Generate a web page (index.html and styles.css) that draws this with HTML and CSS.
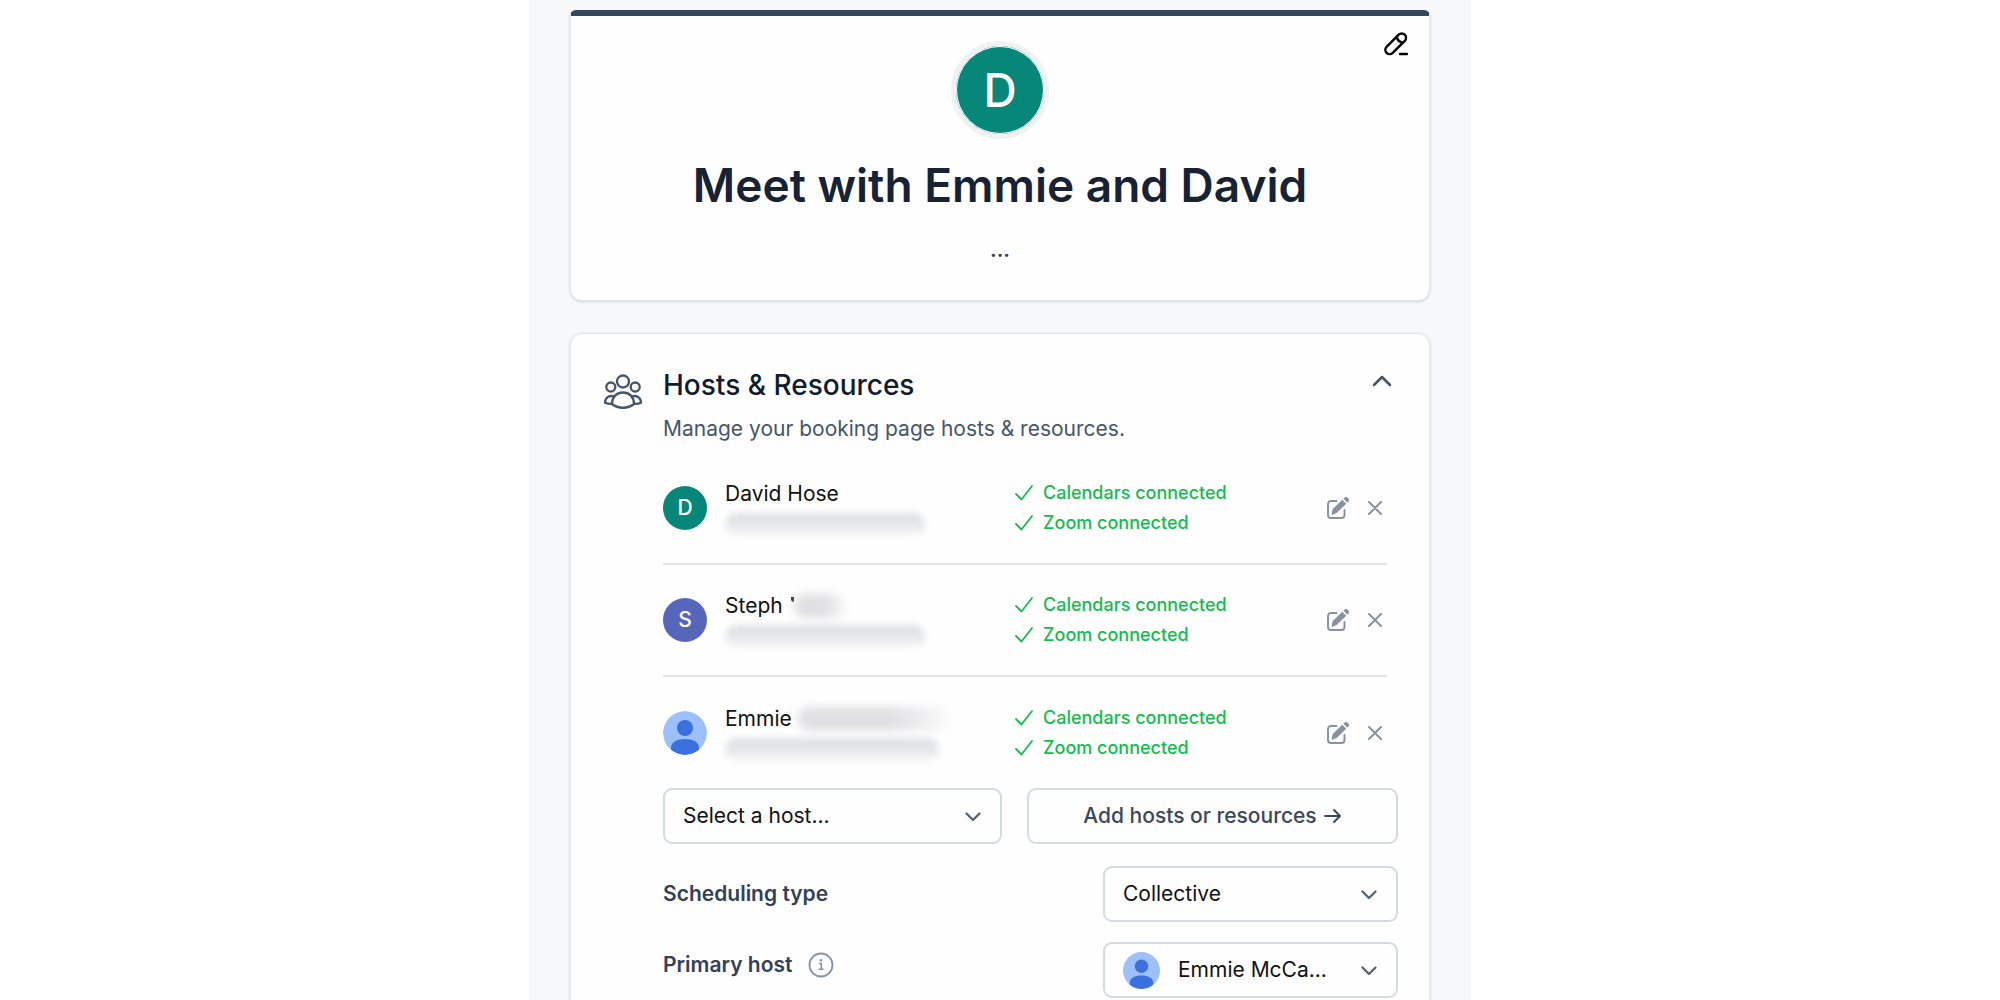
FILE: index.html
```
<!DOCTYPE html>
<html lang="en">

<head>
    <meta charset="utf-8">
    <meta name="viewport" content="width=device-width, initial-scale=1">
    <title>Meet with Emmie and David</title>
    <link rel="stylesheet" href="styles.css">
</head>

<body>
    <!-- shared icons -->
    <svg class="sprite" aria-hidden="true">
        <symbol id="check" viewBox="0 0 18 16">
            <path d="M1 9l5.5 5.5L17 1" fill="none" stroke="currentColor" stroke-width="1.8" stroke-linecap="round" stroke-linejoin="round"/>
        </symbol>
        <symbol id="chevron" viewBox="0 0 16 10">
            <path d="M1.5 1.5L8 8l6.5-6.5" fill="none" stroke="currentColor" stroke-width="2.3" stroke-linecap="round" stroke-linejoin="round"/>
        </symbol>
        <symbol id="edit" viewBox="0 0 22 22">
            <path d="M9.5 4H4a3 3 0 0 0-3 3v11a3 3 0 0 0 3 3h10.5a3 3 0 0 0 3-3v-5" fill="none" stroke="currentColor" stroke-width="1.9" stroke-linecap="round"/>
            <path d="M4.5 18l1.2-6L15.2 2.700l4 4L9.700 16z" fill="currentColor"/>
            <path d="M16.400 1.600l.6-.6a2.700 2.700 0 0 1 4 4l-.8.700z" fill="currentColor"/>
        </symbol>
        <symbol id="cross" viewBox="0 0 14 14">
            <path d="M1 1l12 12M13 1L1 13" fill="none" stroke="currentColor" stroke-width="2" stroke-linecap="round"/>
        </symbol>
        <symbol id="person" viewBox="0 0 44 44">
            <clipPath id="round"><circle cx="22" cy="22" r="22"/></clipPath>
            <g clip-path="url(#round)">
                <rect width="44" height="44" fill="#9dc0fb"/>
                <circle cx="22" cy="17" r="8" fill="#3b71df"/>
                <path d="M8 37c0-6 6-9 14-9s14 3 14 9v7H8z" fill="#3b71df"/>
            </g>
        </symbol>
    </svg>

    <main class="panel">
        <section class="card intro">
            <button class="icon-btn intro-edit" aria-label="Edit page">
                <svg width="24" height="24" viewBox="0 0 24 24" fill="none" stroke="currentColor" stroke-width="2.4" stroke-linecap="round" stroke-linejoin="round">
                    <path d="M2.600 14.800L14.700 2.700a4.300 4.300 0 0 1 6.100 6.100L8.700 20.900a4.300 4.300 0 0 1-6.100-6.100z"/>
                    <path d="M12.800 4.800c.5 3.200 2.600 5.300 5.900 5.900M16 22h7"/>
                </svg>
            </button>
            <div class="avatar avatar-big teal">D</div>
            <h1>Meet with Emmie and David</h1>
            <p class="dots">...</p>
        </section>

        <section class="card hosts">
            <svg class="group" width="38" height="36" viewBox="0 0 38 36" fill="none" stroke="currentColor" stroke-width="2.3" stroke-linejoin="round">
                <circle cx="19" cy="7.5" r="6"/>
                <circle cx="6.800" cy="13" r="4.500"/>
                <circle cx="31.200" cy="13" r="4.500"/>
                <path d="M8 30c0-7 4.500-11.500 11-11.500S30 23 30 30c-6 5-16 5-22 0z"/>
                <path d="M10.500 22.500c-5-1.500-9.500.5-9.500 6.200 2 1 4.500 1.300 7 1.200M27.500 22.500c5-1.500 9.500.5 9.500 6.200-2 1-4.500 1.300-7 1.200"/>
            </svg>
            <div class="content">
                <header class="head">
                    <div>
                        <h2>Hosts &amp; Resources</h2>
                        <p>Manage your booking page hosts &amp; resources.</p>
                    </div>
                    <button class="icon-btn collapse" aria-label="Collapse section">
                        <svg width="20" height="12" viewBox="0 0 20 12" fill="none" stroke="currentColor" stroke-width="2.5" stroke-linecap="round" stroke-linejoin="round">
                            <path d="M2 10l8-8 8 8"/>
                        </svg>
                    </button>
                </header>

                <ul class="host-list">
                    <li class="host">
                        <div class="avatar teal">D</div>
                        <div class="who">
                            <div class="name">David Hose</div>
                            <div class="email"></div>
                        </div>
                        <div class="status">
                            <div><svg width="18" height="16"><use href="#check"/></svg>Calendars connected</div>
                            <div><svg width="18" height="16"><use href="#check"/></svg>Zoom connected</div>
                        </div>
                        <div class="actions">
                            <button class="icon-btn" aria-label="Edit David"><svg width="22" height="22"><use href="#edit"/></svg></button>
                            <button class="icon-btn" aria-label="Remove David"><svg width="14" height="14"><use href="#cross"/></svg></button>
                        </div>
                    </li>
                    <li class="host">
                        <div class="avatar indigo">S</div>
                        <div class="who">
                            <div class="name">Steph <i class="stem"></i><span class="surname short"></span></div>
                            <div class="email"></div>
                        </div>
                        <div class="status">
                            <div><svg width="18" height="16"><use href="#check"/></svg>Calendars connected</div>
                            <div><svg width="18" height="16"><use href="#check"/></svg>Zoom connected</div>
                        </div>
                        <div class="actions">
                            <button class="icon-btn" aria-label="Edit Steph"><svg width="22" height="22"><use href="#edit"/></svg></button>
                            <button class="icon-btn" aria-label="Remove Steph"><svg width="14" height="14"><use href="#cross"/></svg></button>
                        </div>
                    </li>
                    <li class="host">
                        <svg class="avatar" viewBox="0 0 44 44"><use href="#person"/></svg>
                        <div class="who">
                            <div class="name">Emmie <span class="surname"></span></div>
                            <div class="email long"></div>
                        </div>
                        <div class="status">
                            <div><svg width="18" height="16"><use href="#check"/></svg>Calendars connected</div>
                            <div><svg width="18" height="16"><use href="#check"/></svg>Zoom connected</div>
                        </div>
                        <div class="actions">
                            <button class="icon-btn" aria-label="Edit Emmie"><svg width="22" height="22"><use href="#edit"/></svg></button>
                            <button class="icon-btn" aria-label="Remove Emmie"><svg width="14" height="14"><use href="#cross"/></svg></button>
                        </div>
                    </li>
                </ul>

                <div class="add-row">
                    <div class="select">
                        <select aria-label="Select a host">
                            <option>Select a host...</option>
                        </select>
                        <svg class="arrow" width="16" height="10"><use href="#chevron"/></svg>
                    </div>
                    <button class="add-btn">Add hosts or resources
                        <svg width="18" height="16" viewBox="0 0 18 16" fill="none" stroke="currentColor" stroke-width="2" stroke-linecap="round" stroke-linejoin="round">
                            <path d="M1 8h15M10 2l6 6-6 6"/>
                        </svg>
                    </button>
                </div>

                <div class="setting">
                    <label for="type">Scheduling type</label>
                    <div class="select">
                        <select id="type">
                            <option>Collective</option>
                        </select>
                        <svg class="arrow" width="16" height="10"><use href="#chevron"/></svg>
                    </div>
                </div>

                <div class="setting primary">
                    <div class="label-group">
                        <label for="primary">Primary host</label>
                        <svg class="info" width="26" height="26" viewBox="0 0 26 26" fill="none" stroke="currentColor">
                            <circle cx="13" cy="13" r="11.5" stroke-width="1.8"/>
                            <path d="M11 11.5h2.300V17M10.5 17.200h5" stroke-width="1.6"/>
                            <circle cx="13" cy="8.300" r="1.2" fill="currentColor" stroke="none"/>
                        </svg>
                    </div>
                    <div class="select with-avatar">
                        <svg class="mini-avatar" viewBox="0 0 44 44"><use href="#person"/></svg>
                        <select id="primary">
                            <option>Emmie McCa...</option>
                        </select>
                        <svg class="arrow" width="16" height="10"><use href="#chevron"/></svg>
                    </div>
                </div>
            </div>
        </section>
    </main>
</body>

</html>
```
FILE: styles.css
```
* {
    box-sizing: border-box;
}

html {
    scrollbar-width: none;
}

body {
    margin: 0;
    background: #fff;
    color: #111;
    font-family: Inter, sans-serif;
    font-size: 21px;
    line-height: 30px;
}

h1, h2, p, ul {
    margin: 0;
    padding: 0;
}

svg {
    display: block;
    flex-shrink: 0;
}

.sprite {
    position: absolute;
    width: 0;
    height: 0;
}

.panel {
    max-width: 942px;
    min-height: 100vh;
    margin: 0 auto;
    padding: 10px 41px 32px;
    background: #f7f8f9;
    display: flex;
    flex-direction: column;
    gap: 32px;
}

.card {
    background: #fefefe;
    border: 1px solid #dfe2e8;
    border-radius: 12px;
    box-shadow: 0 1px 3px rgba(30, 41, 59, 0.15);
}

.icon-btn {
    padding: 0;
    border: none;
    background: none;
    color: inherit;
    cursor: pointer;
}

/* Intro card */
.intro {
    position: relative;
    border-top: 6px solid #34475f;
    border-radius: 6px 6px 12px 12px;
    padding: 25px 32px 35px;
    display: flex;
    flex-direction: column;
    align-items: center;
    text-align: center;
}

.intro-edit {
    position: absolute;
    top: 16px;
    right: 21px;
    color: #000;
}

.avatar {
    width: 44px;
    height: 44px;
    border-radius: 50%;
    color: #fff;
    font-weight: 500;
    display: flex;
    align-items: center;
    justify-content: center;
    flex-shrink: 0;
}

.avatar-big {
    width: 98px;
    height: 98px;
    border: 5px solid #f0f1f3;
    box-shadow: inset 0 0 0 1px #fff;
    font-size: 46px;
}

.teal {
    background-color: #06877a;
}

.indigo {
    background-color: #5566bb;
}

h1 {
    margin-top: 16px;
    color: #172233;
    font-size: 46px;
    font-weight: 600;
    line-height: 60px;
}

.dots {
    margin-top: 20px;
    color: #334155;
    font-weight: 600;
}

/* Hosts card */
.hosts {
    padding: 33px 31px 32px;
    display: flex;
    gap: 21px;
}

.group {
    margin-top: 7px;
    margin-left: 2px;
    color: #475569;
}

.content {
    flex: 1;
}

.head {
    height: 86px;
    display: flex;
    justify-content: space-between;
    align-items: flex-start;
}

h2 {
    color: #101b2e;
    font-size: 28px;
    font-weight: 500;
    line-height: 36px;
}

.head p {
    margin-top: 11px;
    color: #475569;
}

.collapse {
    margin: 8px 6px 0 0;
    color: #475569;
}

.host-list {
    list-style: none;
    margin-right: 11px;
}

.host {
    height: 112px;
    display: flex;
    align-items: center;
    border-bottom: 2px solid #e0e4ea;
}

.host:last-child {
    height: 111px;
    border-bottom: none;
}

.who {
    flex: 1;
    padding-left: 18px;
}

.name {
    display: flex;
    align-items: center;
    white-space: pre;
}

/* hidden personal details */
.email {
    width: 200px;
    height: 24px;
    margin-top: 4px;
    border-radius: 14px;
    background: linear-gradient(#e0e1e4 30%, #f9f9fa);
    filter: blur(3px);
}

.email.long {
    width: 214px;
}

.surname {
    width: 150px;
    height: 24px;
    border-radius: 12px;
    background: linear-gradient(90deg, #e0e0e2 60%, #f9f9fa);
    filter: blur(4px);
}

.surname.short {
    width: 52px;
}

.stem {
    width: 3px;
    height: 5px;
    margin-left: 2px;
    margin-bottom: 14px;
    border-radius: 0 0 0 3px;
    background: #222;
}

.status {
    width: 312px;
    display: flex;
    flex-direction: column;
    color: #12bd4e;
    font-size: 18px;
    font-weight: 500;
}

.status div {
    display: flex;
    align-items: center;
    gap: 10px;
}

.actions {
    width: 60px;
    padding-right: 5px;
    display: flex;
    align-items: center;
    justify-content: space-between;
    color: #8791a0;
}

.add-row {
    display: flex;
    gap: 25px;
}

.add-row .select {
    flex: 1;
}

.select {
    position: relative;
}

.select select,
.add-btn {
    width: 100%;
    height: 56px;
    border: 2px solid #d5d9e0;
    border-radius: 9px;
    background: #fefefe;
    color: #111;
    font: inherit;
    cursor: pointer;
}

.select select {
    appearance: none;
    display: block;
    padding: 0 48px 0 18px;
}

.arrow {
    position: absolute;
    top: 24px;
    right: 21px;
    color: #566377;
    pointer-events: none;
}

.add-row .add-btn {
    width: 371px;
    color: #3b475a;
    font-weight: 500;
    display: flex;
    align-items: center;
    justify-content: center;
    gap: 7px;
}

.setting {
    margin-top: 22px;
    display: flex;
    align-items: center;
    justify-content: space-between;
}

.setting label {
    color: #334155;
    font-weight: 600;
}

.setting .select {
    width: 295px;
}

.primary {
    margin-top: 20px;
    align-items: flex-start;
}

.label-group {
    display: flex;
    align-items: center;
    gap: 16px;
    padding-top: 8px;
}

.info {
    color: #8490a3;
}

.mini-avatar {
    position: absolute;
    top: 10px;
    left: 20px;
    width: 37px;
    height: 37px;
    pointer-events: none;
}

.with-avatar select {
    padding-left: 73px;
}
```
